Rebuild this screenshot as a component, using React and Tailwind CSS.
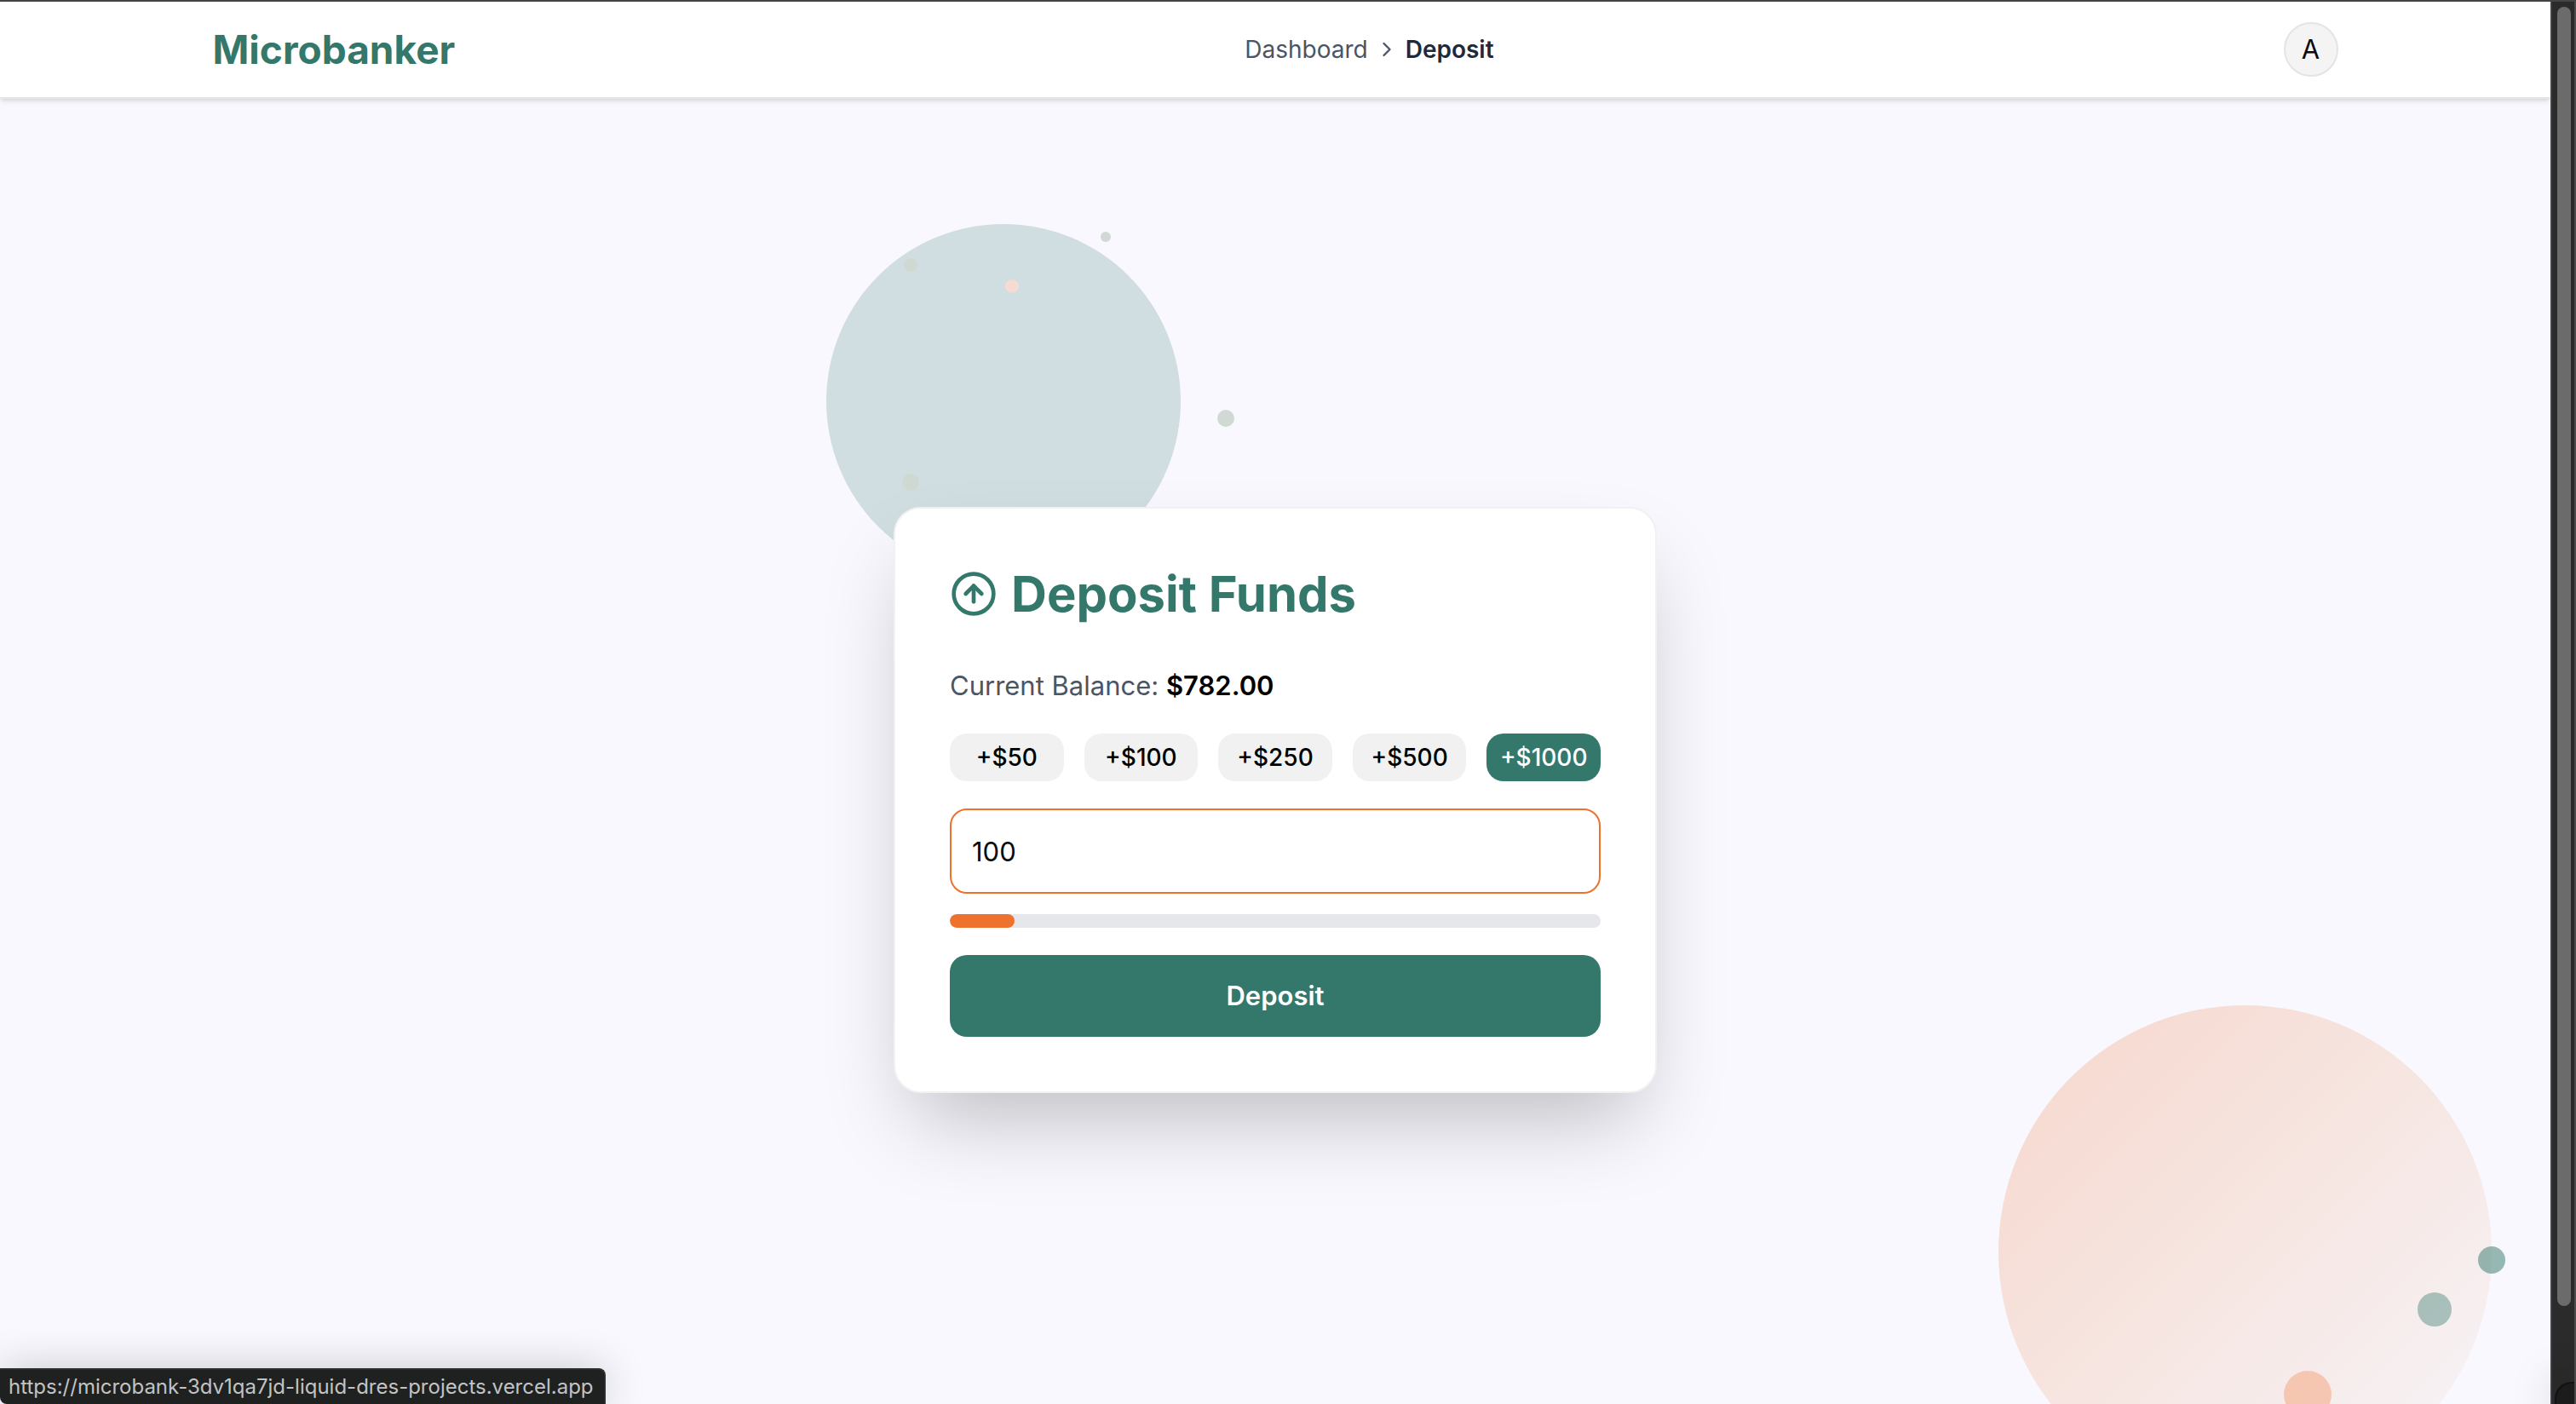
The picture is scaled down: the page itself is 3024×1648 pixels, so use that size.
import { ChevronRight, CircleArrowUp } from "lucide-react";

const AMOUNTS = [50, 100, 250, 500, 1000];
const SELECTED = 1000;
const MAX = 1000;

function Header() {
  return (
    <header className="relative z-10 shrink-0 border-b-2 border-[#e4e4e9] bg-white shadow-md">
      <div className="mx-auto flex h-28 w-5/6 items-center justify-between">
        <a href="#home" className="text-[46px] font-bold text-[#34786b]">
          Microbanker
        </a>
        <nav aria-label="Breadcrumb" className="flex items-center text-[28px] leading-10">
          <a href="#dashboard" className="text-gray-600">
            Dashboard
          </a>
          <ChevronRight className="mx-2 size-7 text-gray-600" strokeWidth={2} />
          <span className="font-semibold text-gray-800" aria-current="page">
            Deposit
          </span>
        </nav>
        <button
          type="button"
          aria-label="Account"
          className="flex size-16 items-center justify-center rounded-full border-2 border-[#e4e4e4] bg-[#f4f4f4] text-[31px] text-neutral-950"
        >
          A
        </button>
      </div>
    </header>
  );
}

function CardBubbles() {
  return (
    <div aria-hidden="true" className="absolute -top-[332px] -left-[79px] size-[416px] rounded-full bg-[#d0dee1]">
      <span className="absolute top-[9px] left-[322px] size-3 rounded-full bg-[#d0d9d4]" />
      <span className="absolute top-10 left-[91px] size-4 rounded-full bg-[#d0d9d1]" />
      <span className="absolute top-[65px] left-[210px] size-4 rounded-full bg-[#f5dbd1]" />
      <span className="absolute top-[218px] left-[459px] size-5 rounded-full bg-[#d0d9d4]" />
      <span className="absolute top-[293px] left-[89px] size-5 rounded-full bg-[#d0d9d1]" />
    </div>
  );
}

function CornerBubbles() {
  return (
    <div
      aria-hidden="true"
      className="absolute top-[1064px] right-[69px] size-[579px] rounded-full bg-linear-to-br from-[#f6d7cc] via-[#f6e6e2] to-[#f6f5fa]"
    >
      <span className="absolute top-[283px] left-[563px] size-8 rounded-full bg-[#34786b]/50" />
      <span className="absolute top-[337px] left-[492px] size-10 rounded-full bg-[#34786b]/40" />
      <span className="absolute top-[429px] left-[335px] size-14 rounded-full bg-[#f3722c]/30" />
    </div>
  );
}

function DepositCard() {
  const amount = 100;
  return (
    <form
      className="relative w-full rounded-4xl border-2 border-[#f1f1f2] bg-white p-16 shadow-[0_50px_100px_-24px_rgba(0,0,0,0.25)]"
      onSubmit={(e) => e.preventDefault()}
    >
      <h1 className="mb-12 flex items-center gap-4 text-[58px] leading-[72px] font-bold text-[#34786b]">
        <CircleArrowUp className="size-14" strokeWidth={2} />
        Deposit Funds
      </h1>
      <p className="mb-8 text-[31px] leading-12 text-gray-600">
        Current Balance: <span className="font-semibold text-black">$782.00</span>
      </p>
      <div className="mb-8 grid grid-cols-5 gap-6">
        {AMOUNTS.map((value) => (
          <button
            key={value}
            type="button"
            aria-pressed={value === SELECTED}
            className={
              value === SELECTED
                ? "h-14 rounded-[20px] bg-[#34786b] text-[28px] leading-10 font-medium text-white"
                : "h-14 rounded-[20px] bg-[#f1f1f1] text-[28px] leading-10 font-medium text-black"
            }
          >
            +${value}
          </button>
        ))}
      </div>
      <input
        type="text"
        inputMode="numeric"
        aria-label="Deposit amount"
        defaultValue={amount}
        className="mb-6 block h-[100px] w-full rounded-[20px] border-2 border-[#ee722e] bg-white px-6 text-[31px] text-neutral-950 outline-none"
      />
      <div
        role="progressbar"
        aria-label="Deposit limit used"
        aria-valuenow={amount}
        aria-valuemax={MAX}
        className="mb-8 h-4 overflow-hidden rounded-full bg-gray-200"
      >
        <div className="h-full rounded-full bg-[#ee722e]" style={{ width: `${(amount / MAX) * 100}%` }} />
      </div>
      <button type="submit" className="h-24 w-full rounded-[20px] bg-[#34786b] text-[31px] font-semibold text-white">
        Deposit
      </button>
    </form>
  );
}

function Scrollbar() {
  return (
    <div
      aria-hidden="true"
      className="relative w-[30px] shrink-0 border-r-2 border-l-2 border-r-[#4c4c4c] border-l-[#404142] bg-[#2b2b2b] px-1.5 pt-1.5 pr-1"
    >
      <div className="h-[93%] rounded-full bg-[#6b6b6b]" />
      <div className="absolute right-0 bottom-0 left-[3px] h-[26px] rounded-tl-[20px] border-t-2 border-l-2 border-[#111] bg-[#1c1c1c] shadow-[0_0_50px_rgba(0,0,0,0.4)]" />
    </div>
  );
}

export default function App() {
  return (
    <div className="relative flex h-screen overflow-hidden border-t-2 border-[#444] bg-[#f9f8fe] font-['Inter',sans-serif]">
      <div className="relative flex min-w-0 flex-1 flex-col overflow-hidden">
        <Header />
        <main className="relative flex h-[calc(100vh-2px)] shrink-0 items-center justify-center">
          <CornerBubbles />
          <div className="relative w-full max-w-4xl">
            <CardBubbles />
            <DepositCard />
          </div>
        </main>
      </div>
      <Scrollbar />
      <div
        role="status"
        className="absolute bottom-0 left-0 rounded-tr-lg rounded-bl-lg border-t-2 border-r-2 border-[#2c2e2d] bg-[#1f2120] pr-3 pl-2.5 text-2xl leading-10 text-[#c3c3c3] shadow-[0_0_50px_rgba(0,0,0,0.2)]"
      >
        https://microbank-3dv1qa7jd-liquid-dres-projects.vercel.app
      </div>
    </div>
  );
}
